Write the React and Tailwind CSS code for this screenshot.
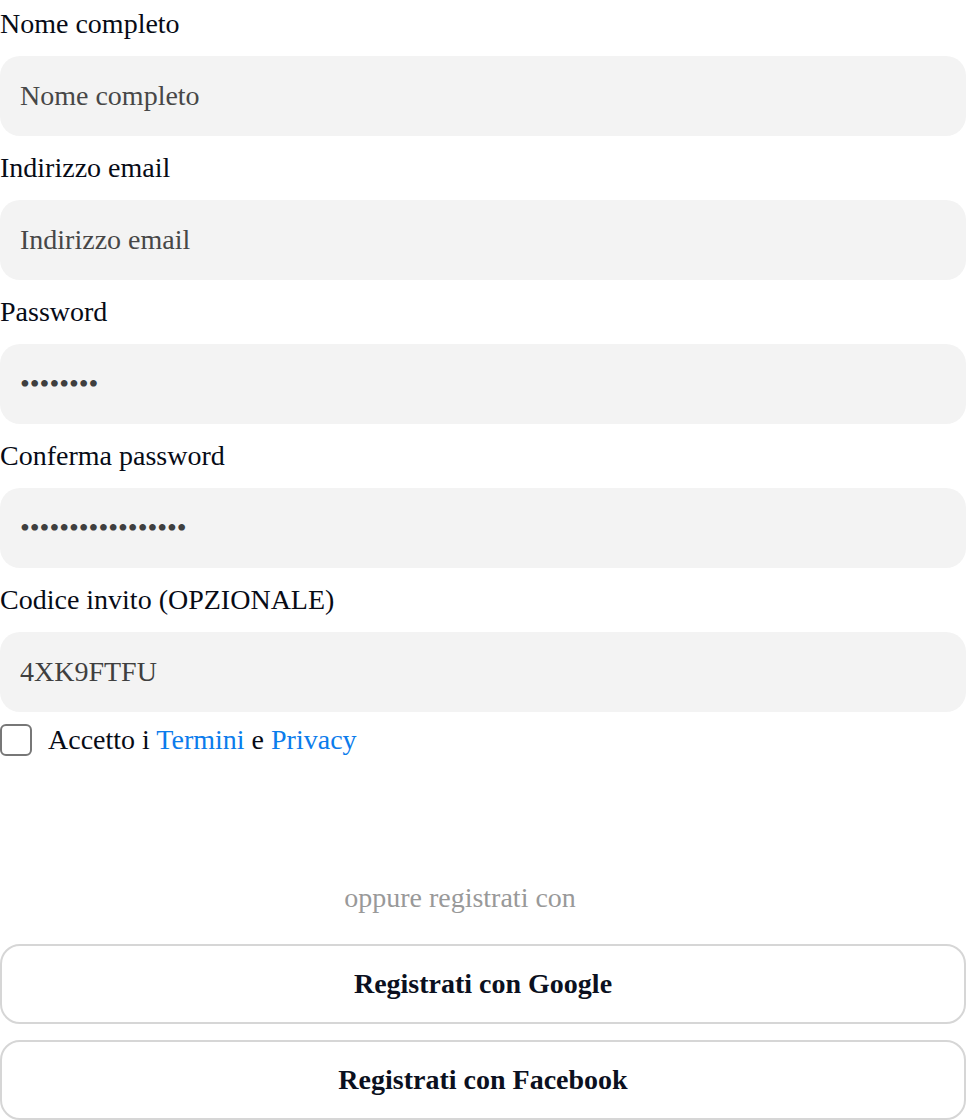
import { useState } from "react";

const FIELDS = [
  { id: "name", label: "Nome completo", type: "text", placeholder: "Nome completo" },
  { id: "email", label: "Indirizzo email", type: "email", placeholder: "Indirizzo email" },
  { id: "password", label: "Password", type: "password", value: "password" },
  { id: "confirm", label: "Conferma password", type: "password", value: "password123456789" },
  { id: "invite", label: "Codice invito (OPZIONALE)", type: "text", value: "4XK9FTFU" },
];

function Field({ id, label, type, placeholder, value }) {
  const [val, setVal] = useState(value ?? "");
  return (
    <div className="flex flex-col">
      <label htmlFor={id} className="mb-2 leading-[48px] text-[#070b16]">
        {label}
      </label>
      <input
        id={id}
        type={type}
        value={val}
        placeholder={placeholder}
        onChange={(e) => setVal(e.target.value)}
        className="h-20 w-full rounded-[20px] bg-[#f3f3f3] px-5 text-[#3f3f3f] outline-none placeholder:text-[#474747]"
      />
    </div>
  );
}

export default function App() {
  const [accepted, setAccepted] = useState(false);

  return (
    <div className="w-[966px] bg-white font-['Liberation_Serif',serif] text-[28px]">
      {/* ── Form fields ── */}
      <div className="flex flex-col gap-2">
        {FIELDS.map((f) => (
          <Field key={f.id} {...f} />
        ))}
      </div>

      {/* ── Terms ── */}
      <label className="mt-3 flex h-8 items-center gap-4 leading-8 text-[#070b16]">
        <input
          type="checkbox"
          checked={accepted}
          onChange={(e) => setAccepted(e.target.checked)}
          className="h-8 w-8 shrink-0 appearance-none rounded-[6px] border-2 border-[#777] bg-white"
        />
        <span>
          Accetto i <a href="#" className="text-[#0b7cec]">Termini</a> e{" "}
          <a href="#" className="text-[#0b7cec]">Privacy</a>
        </span>
      </label>

      {/* ── Social sign up ── */}
      <p className="mt-[118px] pr-[46px] text-center leading-[48px] text-[#999]">oppure registrati con</p>
      <div className="mt-[22px] flex flex-col gap-4">
        <button className="h-20 w-full rounded-[20px] border-2 border-[#d6d6d6] bg-white font-bold text-[#0b1020]">
          Registrati con Google
        </button>
        <button className="h-20 w-full rounded-[20px] border-2 border-[#d6d6d6] bg-white font-bold text-[#0b1020]">
          Registrati con Facebook
        </button>
      </div>
    </div>
  );
}
